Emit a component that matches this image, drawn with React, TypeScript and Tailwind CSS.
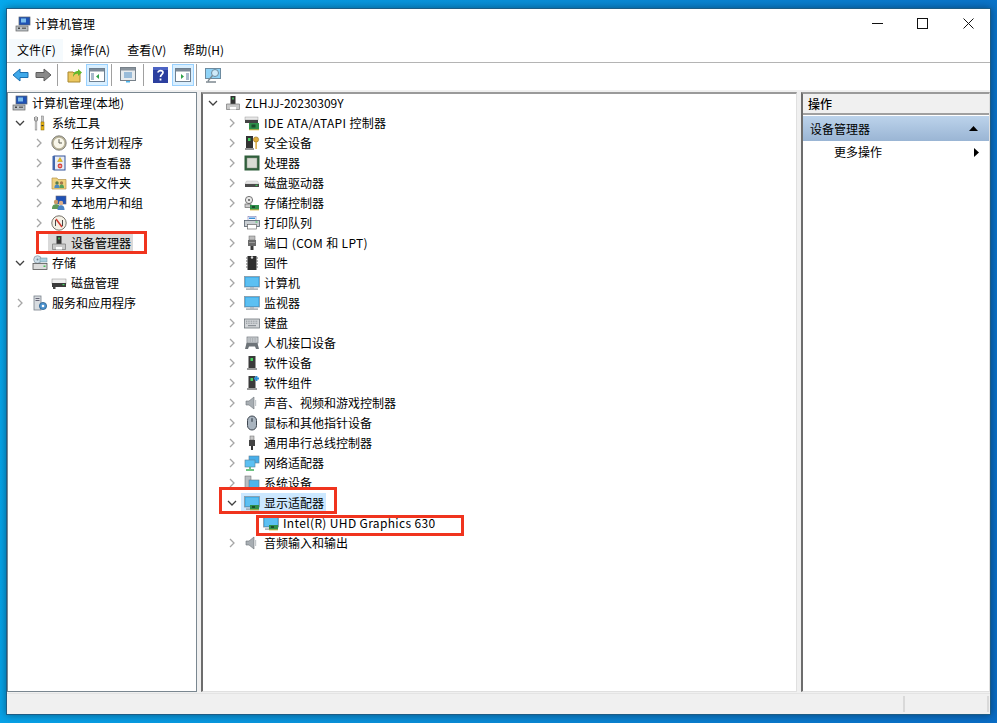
import type { ReactNode } from "react";

const Ico = ({ children, className = "w-4 h-4" }: { children: ReactNode; className?: string }) => (
  <svg viewBox="0 0 16 16" className={`${className} shrink-0`}>
    {children}
  </svg>
);

const Monitor = () => (
  <>
    <rect x="0.5" y="1.5" width="15" height="10.5" fill="#2f9fe0" stroke="#8a9aa5" strokeWidth="0.8" />
    <rect x="1.5" y="2.5" width="13" height="8.5" fill="#5cc0f2" />
    <rect x="6" y="12" width="4" height="1.5" fill="#b5bcc2" />
    <rect x="2" y="13.5" width="12" height="1.2" fill="#8d979e" />
  </>
);

const Card = () => (
  <>
    <rect x="6" y="10" width="9" height="5" fill="#2f8f4a" />
    <rect x="8" y="11" width="3" height="2" fill="#1c4d2c" />
    <rect x="6" y="14.4" width="9" height="1" fill="#d9b84a" />
  </>
);

const Tower = () => (
  <>
    <rect x="4.5" y="1" width="7" height="12" fill="#3a3a3a" />
    <rect x="6.5" y="3" width="2.5" height="3" fill="#46d060" />
    <rect x="3" y="13" width="10" height="2" fill="#9a9a9a" />
  </>
);

const Speaker = () => (
  <>
    <path d="M2 6h3l5-4v12l-5-4H2z" fill="#a8aeb3" stroke="#6d7378" strokeWidth="0.6" />
    <rect x="11" y="5" width="1.2" height="6" fill="#c4c8cb" />
  </>
);

const DevMgr = () => (
  <>
    <rect x="5.5" y="1" width="5" height="8" fill="#333" />
    <rect x="7.2" y="2.5" width="1.6" height="2" fill="#49cf62" />
    <path d="M1.5 9h13v5.5h-13z" fill="#c9c9c9" stroke="#777" strokeWidth="0.7" />
    <rect x="5" y="12" width="6" height="2.5" fill="#fff" />
  </>
);

const CompMgmt = () => (
  <>
    <rect x="4" y="1" width="11" height="8" fill="#1f52b5" stroke="#5a6470" strokeWidth="0.7" />
    <rect x="6" y="2.5" width="5" height="4" fill="#7fc0ee" />
    <rect x="1" y="10" width="12" height="5" fill="#b9bfc4" stroke="#666" strokeWidth="0.7" />
    <rect x="3" y="11.5" width="2" height="1.5" fill="#444" />
    <rect x="7" y="11.5" width="4" height="1.5" fill="#666" />
  </>
);

const icons: Record<string, ReactNode> = {
  comp: <CompMgmt />,
  tools: (
    <>
      <path d="M4 1v5M2.5 2v3c0 1 1 1.5 1.5 1.5S5.5 6 5.5 5V2" fill="none" stroke="#8a8a8a" strokeWidth="1" />
      <rect x="3.2" y="6" width="1.6" height="9" fill="#f4f4f4" stroke="#7b7b7b" strokeWidth="0.6" />
      <rect x="9.5" y="1" width="2" height="6" fill="#c8c8c8" stroke="#777" strokeWidth="0.5" />
      <rect x="9" y="7" width="3" height="8" fill="#e7b416" stroke="#8a6a00" strokeWidth="0.5" />
      <rect x="9.5" y="10" width="2" height="1.2" fill="#333" />
    </>
  ),
  clock: (
    <>
      <circle cx="8" cy="8" r="7.2" fill="#b9b39a" stroke="#70706a" strokeWidth="0.8" />
      <circle cx="8" cy="8" r="5.3" fill="#f8f6ea" />
      <path d="M8 4.2V8h3" fill="none" stroke="#5b5b50" strokeWidth="1" />
    </>
  ),
  log: (
    <>
      <rect x="3" y="1" width="11" height="14" fill="#e9edf5" stroke="#35559a" strokeWidth="1" />
      <rect x="1.5" y="1" width="2.5" height="14" fill="#4267ad" />
      <path d="M9 2.5l2.4 4H6.6z" fill="#f1c40f" stroke="#9a7a00" strokeWidth="0.4" />
      <circle cx="9" cy="11" r="2.4" fill="#d8403a" />
      <rect x="7.8" y="10.5" width="2.4" height="1" fill="#fff" />
    </>
  ),
  share: (
    <>
      <path d="M1 3h5l1 1.5h8V14H1z" fill="#efd27e" stroke="#b4944a" strokeWidth="0.7" />
      <circle cx="6" cy="8" r="1.7" fill="#5a7d46" />
      <path d="M3.4 13c0-3 1.2-3.5 2.6-3.5S8.6 10 8.6 13z" fill="#4d8ac0" />
      <circle cx="10.5" cy="8" r="1.7" fill="#a5774a" />
      <path d="M8.4 13c0-3 .8-3.5 2.1-3.5s2.5.5 2.5 3.5z" fill="#54a15c" />
    </>
  ),
  users: (
    <>
      <rect x="5" y="1" width="10" height="8" fill="#1f52b5" stroke="#667" strokeWidth="0.6" />
      <circle cx="5" cy="7" r="2.2" fill="#c99a68" />
      <path d="M1 14c0-4 2-4.7 4-4.7s4 .7 4 4.7z" fill="#5e9a5a" />
      <circle cx="10" cy="8" r="2.2" fill="#ddb088" />
      <path d="M6.5 15c0-3.6 1.6-4.7 3.5-4.7s3.5 1 3.5 4.7z" fill="#4a84c4" />
    </>
  ),
  perf: (
    <>
      <circle cx="8" cy="8" r="7.2" fill="#f4f1e6" stroke="#77736a" strokeWidth="1" />
      <path d="M5 4l6 8" stroke="#d23a30" strokeWidth="1.6" />
      <path d="M4.5 11V5M11.5 11V5" stroke="#333" strokeWidth="0.9" />
    </>
  ),
  dev: <DevMgr />,
  storage: (
    <>
      <circle cx="5.5" cy="4.5" r="3.8" fill="#cfe0ea" stroke="#7c8f9c" strokeWidth="0.7" />
      <circle cx="5.5" cy="4.5" r="1" fill="#6f8896" />
      <rect x="8" y="3" width="7" height="4" fill="#a9d1df" stroke="#6c8a98" strokeWidth="0.5" />
      <rect x="1" y="8.5" width="14" height="6" fill="#dcdcdc" stroke="#555" strokeWidth="0.8" />
      <rect x="11.5" y="10.5" width="2" height="1.5" fill="#47c25b" />
    </>
  ),
  disk: (
    <>
      <rect x="1" y="4" width="14" height="5" fill="#eeeeee" stroke="#888" strokeWidth="0.5" />
      <rect x="1" y="8" width="14" height="4" fill="#3b3b3b" />
      <rect x="11.5" y="9" width="2" height="1.2" fill="#45d35f" />
      <rect x="2" y="12" width="2.5" height="2" fill="#444" />
    </>
  ),
  services: (
    <>
      <rect x="2" y="1" width="7" height="14" fill="#d8dce0" stroke="#78808a" strokeWidth="0.8" />
      <rect x="3.5" y="3" width="4" height="1" fill="#667" />
      <rect x="3.5" y="5" width="4" height="1" fill="#667" />
      <circle cx="11" cy="11" r="3.6" fill="#4d93cf" stroke="#2a5e8c" strokeWidth="0.8" />
      <circle cx="11" cy="11" r="1.3" fill="#fff" />
    </>
  ),
  ide: (
    <>
      <rect x="1" y="2" width="13" height="3" fill="#e8e8e8" stroke="#888" strokeWidth="0.4" />
      <rect x="1" y="5" width="13" height="3" fill="#444" />
      <rect x="5" y="8" width="10" height="7" fill="#2f8f4a" />
      <rect x="7.5" y="9.5" width="4" height="3" fill="#1c4d2c" />
      <rect x="5" y="14.3" width="10" height="1" fill="#d9b84a" />
    </>
  ),
  security: (
    <>
      <rect x="2" y="1" width="7" height="12" fill="#333" />
      <rect x="4" y="3" width="2.5" height="3" fill="#46d060" />
      <rect x="1" y="13" width="9" height="2" fill="#999" />
      <circle cx="12" cy="4.5" r="2.6" fill="#e2ad3b" stroke="#96701a" strokeWidth="0.6" />
      <rect x="11.4" y="7" width="1.4" height="7" fill="#d9a432" />
    </>
  ),
  cpu: (
    <>
      <rect x="0.5" y="0.5" width="15" height="15" fill="#2f5f3b" />
      <rect x="3" y="3" width="10" height="10" fill="#d9dcd4" stroke="#8a9488" strokeWidth="0.5" />
    </>
  ),
  drive: (
    <>
      <path d="M2.5 6h11l1.5 3H1z" fill="#e6e6e6" stroke="#aaa" strokeWidth="0.4" />
      <rect x="1" y="9" width="14" height="3" fill="#4a4a4a" />
      <rect x="11.5" y="9.8" width="2" height="1.1" fill="#43d15e" />
    </>
  ),
  ctrl: (
    <>
      <circle cx="5" cy="5" r="3.6" fill="#e8e8e8" stroke="#555" strokeWidth="0.8" />
      <circle cx="5" cy="5" r="1" fill="#555" />
      <rect x="1" y="9" width="6" height="3.5" fill="#ccc" stroke="#555" strokeWidth="0.6" />
      <Card />
    </>
  ),
  printer: (
    <>
      <rect x="4" y="1.5" width="8" height="4" fill="#fff" stroke="#66a" strokeWidth="0.5" />
      <rect x="5" y="2.5" width="6" height="1.5" fill="#3f8fd8" />
      <rect x="0.5" y="5.5" width="15" height="6" fill="#c9ced2" stroke="#55606a" strokeWidth="0.8" />
      <rect x="3.5" y="9.5" width="9" height="4.5" fill="#fff" stroke="#555" strokeWidth="0.6" />
      <rect x="11.5" y="6.5" width="2" height="1" fill="#3fd05c" />
    </>
  ),
  port: (
    <>
      <rect x="5" y="1" width="6" height="4" fill="#bdbdbd" stroke="#666" strokeWidth="0.5" />
      <rect x="4" y="5" width="8" height="6" fill="#6b6b6b" />
      <rect x="5" y="7" width="6" height="1" fill="#9a9a9a" />
      <rect x="6.5" y="11" width="3" height="4" fill="#3a3a3a" />
    </>
  ),
  firmware: (
    <>
      <path d="M2 3h1.5M2 6h1.5M2 9h1.5M2 12h1.5M12.5 3H14M12.5 6H14M12.5 9H14M12.5 12H14" stroke="#666" strokeWidth="1" />
      <rect x="3.5" y="1" width="9" height="14" fill="#2e2e2e" />
      <circle cx="8" cy="2.5" r="1.2" fill="#ddd" />
    </>
  ),
  monitor: <Monitor />,
  keyboard: (
    <>
      <rect x="0.5" y="4" width="15" height="9" fill="#d2d5d8" stroke="#6f767c" strokeWidth="0.8" />
      <path d="M2 6.2h12M2 8.2h12" stroke="#8a9096" strokeWidth="1" strokeDasharray="1 .7" />
      <rect x="4" y="10" width="8" height="1.2" fill="#8a9096" />
    </>
  ),
  hid: (
    <>
      <rect x="3" y="2" width="11" height="6" fill="#cfd3d6" stroke="#6f767c" strokeWidth="0.7" />
      <path d="M4.5 4h8M4.5 6h8" stroke="#7a8086" strokeWidth="0.9" strokeDasharray="1 .7" />
      <path d="M1 14l1.5-6h11L15 14h-3l-1-2.5H5L4 14z" fill="#6d7378" />
    </>
  ),
  soft: <Tower />,
  softc: (
    <>
      <Tower />
      <path d="M12.5 1v5M10 3.5h5" stroke="#2a8fd8" strokeWidth="1.8" />
    </>
  ),
  sound: <Speaker />,
  mouse: (
    <>
      <rect x="3.5" y="1" width="9" height="14" rx="4.5" fill="#a9b4bf" stroke="#3e4650" strokeWidth="1" />
      <rect x="7.2" y="3" width="1.6" height="4" rx="0.8" fill="#56616c" />
    </>
  ),
  usb: (
    <>
      <rect x="6" y="1" width="4" height="4" fill="#c8c8c8" stroke="#666" strokeWidth="0.5" />
      <rect x="5" y="5" width="6" height="6" fill="#444" />
      <rect x="7" y="11" width="2" height="4" fill="#333" />
    </>
  ),
  network: (
    <>
      <rect x="5" y="1" width="10" height="7" fill="#47aeea" stroke="#5b7f96" strokeWidth="0.6" />
      <rect x="1" y="5" width="10" height="7" fill="#5cc0f2" stroke="#5b7f96" strokeWidth="0.6" />
      <path d="M6 12v2M2 15h8" stroke="#3fae5a" strokeWidth="1.4" />
    </>
  ),
  system: (
    <>
      <rect x="1" y="1" width="6" height="12" fill="#b9bec2" stroke="#666" strokeWidth="0.5" />
      <rect x="5" y="5" width="10" height="8" fill="#4db4ec" stroke="#6a7a85" strokeWidth="0.6" />
    </>
  ),
  display: (
    <>
      <Monitor />
      <Card />
    </>
  ),
};

type RowProps = {
  pad: string;
  icon: string;
  label: string;
  arrow?: "right" | "down";
  selected?: string;
  clipped?: boolean;
  wide?: boolean;
};

const Arrow = ({ dir }: { dir?: "right" | "down" }) => (
  <svg viewBox="0 0 10 10" className="w-[10px] h-[10px] shrink-0 mr-[7px]">
    {dir === "right" && <path d="M3 1l4 4-4 4" fill="none" stroke="#a6a6a6" strokeWidth="1.3" />}
    {dir === "down" && <path d="M1 3l4 4 4-4" fill="none" stroke="#404040" strokeWidth="1.3" />}
  </svg>
);

const Row = ({ pad, icon, label, arrow, selected, clipped, wide }: RowProps) => (
  <div className={clipped ? "h-[14px] mb-[6px] overflow-hidden" : "h-5"}>
    <div className={`h-5 flex items-center ${pad}`}>
      <Arrow dir={arrow} />
      <div className={`flex items-center h-5 gap-[1px] ${selected ?? ""}`}>
        <Ico>{icons[icon]}</Ico>
        <span className={`pl-[3px] pr-[2px] whitespace-nowrap ${wide ? "tracking-[0.35px]" : ""}`}>{label}</span>
      </div>
    </div>
  </div>
);

const leftRows: RowProps[] = [
  { pad: "ml-[-15px]", icon: "comp", label: "计算机管理(本地)" },
  { pad: "pl-[5px]", icon: "tools", label: "系统工具", arrow: "down" },
  { pad: "pl-[24px]", icon: "clock", label: "任务计划程序", arrow: "right" },
  { pad: "pl-[24px]", icon: "log", label: "事件查看器", arrow: "right" },
  { pad: "pl-[24px]", icon: "share", label: "共享文件夹", arrow: "right" },
  { pad: "pl-[24px]", icon: "users", label: "本地用户和组", arrow: "right" },
  { pad: "pl-[24px]", icon: "perf", label: "性能", arrow: "right" },
  { pad: "pl-[24px]", icon: "dev", label: "设备管理器", selected: "bg-[#d9d9d9] ml-[-3px] pl-[3px]" },
  { pad: "pl-[5px]", icon: "storage", label: "存储", arrow: "down" },
  { pad: "pl-[24px]", icon: "disk", label: "磁盘管理" },
  { pad: "pl-[5px]", icon: "services", label: "服务和应用程序", arrow: "right" },
];

const midRows: RowProps[] = [
  { pad: "pl-[5px]", icon: "dev", label: "ZLHJJ-20230309Y", arrow: "down" },
  { pad: "pl-[24px]", icon: "ide", label: "IDE ATA/ATAPI 控制器", arrow: "right", wide: true },
  { pad: "pl-[24px]", icon: "security", label: "安全设备", arrow: "right" },
  { pad: "pl-[24px]", icon: "cpu", label: "处理器", arrow: "right" },
  { pad: "pl-[24px]", icon: "drive", label: "磁盘驱动器", arrow: "right" },
  { pad: "pl-[24px]", icon: "ctrl", label: "存储控制器", arrow: "right" },
  { pad: "pl-[24px]", icon: "printer", label: "打印队列", arrow: "right" },
  { pad: "pl-[24px]", icon: "port", label: "端口 (COM 和 LPT)", arrow: "right", wide: true },
  { pad: "pl-[24px]", icon: "firmware", label: "固件", arrow: "right" },
  { pad: "pl-[24px]", icon: "monitor", label: "计算机", arrow: "right" },
  { pad: "pl-[24px]", icon: "monitor", label: "监视器", arrow: "right" },
  { pad: "pl-[24px]", icon: "keyboard", label: "键盘", arrow: "right" },
  { pad: "pl-[24px]", icon: "hid", label: "人机接口设备", arrow: "right" },
  { pad: "pl-[24px]", icon: "soft", label: "软件设备", arrow: "right" },
  { pad: "pl-[24px]", icon: "softc", label: "软件组件", arrow: "right" },
  { pad: "pl-[24px]", icon: "sound", label: "声音、视频和游戏控制器", arrow: "right" },
  { pad: "pl-[24px]", icon: "mouse", label: "鼠标和其他指针设备", arrow: "right" },
  { pad: "pl-[24px]", icon: "usb", label: "通用串行总线控制器", arrow: "right" },
  { pad: "pl-[24px]", icon: "network", label: "网络适配器", arrow: "right" },
  { pad: "pl-[24px]", icon: "system", label: "系统设备", arrow: "right", clipped: true },
  { pad: "pl-[24px]", icon: "display", label: "显示适配器", arrow: "down", selected: "bg-[#cce8ff] ml-[-3px] pl-[3px]" },
  { pad: "pl-[43px]", icon: "display", label: "Intel(R) UHD Graphics 630", wide: true },
  { pad: "pl-[24px]", icon: "sound", label: "音频输入和输出", arrow: "right" },
];

const menus = ["文件(F)", "操作(A)", "查看(V)", "帮助(H)"];

const Sep = () => <div className="w-px h-[22px] bg-[#a0a0a0]" />;

const PaneBtn = ({ right }: { right?: boolean }) => (
  <div className="w-[22px] h-[22px] border border-[#99d1ff] bg-[#d9efff] flex items-center justify-center">
    <svg viewBox="0 0 16 14" className="w-4 h-[14px]">
      <rect x="0.5" y="0.5" width="15" height="13" fill="#fff" stroke="#6d7f90" />
      <rect x="1" y="1" width="14" height="2.5" fill="#7d8b98" />
      {right ? (
        <>
          <rect x="11" y="5" width="3" height="7" fill="#a9bbcc" />
          <path d="M6 6l3 2.5L6 11z" fill="#2fa34a" />
        </>
      ) : (
        <>
          <rect x="2" y="5" width="3" height="7" fill="#a9bbcc" />
          <path d="M10 6L7 8.5l3 2.5z" fill="#2fa34a" />
        </>
      )}
    </svg>
  </div>
);

const Toolbar = () => (
  <div className="h-[28px] bg-white flex items-center pl-[4px] pb-[3px] border-t border-[#b4b4b4] shrink-0">
    <svg viewBox="0 0 17 16" className="w-[17px] h-4 ml-[1px]">
      <path d="M1 8l7-6v3.5h8v5H8V14z" fill="#3fa9ea" stroke="#1b6fb0" />
    </svg>
    <svg viewBox="0 0 17 16" className="w-[17px] h-4 ml-[6px] mr-[5px]">
      <path d="M16 8L9 2v3.5H1v5h8V14z" fill="#8a8a8a" stroke="#5c5c5c" />
    </svg>
    <Sep />
    <svg viewBox="0 0 16 16" className="w-4 h-4 ml-[9px] mr-[3px]">
      <path d="M1 5h5l1 1h6v9H1z" fill="#ecc75f" stroke="#a8872e" />
      <path d="M6 10c0-4 2-6 5-6V2l4 3.5L11 9V6.5c-2 0-4 1-5 3.5z" fill="#63b82c" />
    </svg>
    <PaneBtn />
    <div className="w-[3px]" />
    <Sep />
    <svg viewBox="0 0 16 16" className="w-4 h-4 ml-[8px] mr-[7px]">
      <rect x="0.5" y="0.5" width="15" height="13" fill="#e7ebee" stroke="#77818a" />
      <rect x="1" y="1" width="14" height="2.5" fill="#8a949d" />
      <path d="M4 6h8M4 8h8M4 10h8" stroke="#4d8cc4" strokeWidth="1" />
      <rect x="6" y="14" width="4" height="1.5" fill="#4db4ec" />
    </svg>
    <Sep />
    <svg viewBox="0 0 15 16" className="w-[15px] h-4 ml-[9px] mr-[4px]">
      <rect width="15" height="16" fill="#2c3f9e" />
      <rect x="0" y="0" width="15" height="3" fill="#4c63c4" />
      <path d="M5 5.5C5 3 10 3 10 5.5 10 7.5 7.5 7.5 7.5 10" fill="none" stroke="#fff" strokeWidth="1.7" />
      <rect x="6.6" y="11.5" width="1.8" height="2" fill="#fff" />
    </svg>
    <PaneBtn right />
    <div className="w-[2px]" />
    <Sep />
    <svg viewBox="0 0 17 16" className="w-[17px] h-4 ml-[8px]">
      <rect x="0.5" y="1.5" width="15" height="10" fill="#8fd3f7" stroke="#6d8ba0" />
      <circle cx="10" cy="6" r="3.5" fill="#cfeaf9" stroke="#6d8ba0" />
      <path d="M7.5 8.5L3 14M1 15h10" stroke="#7d8890" strokeWidth="1.3" />
    </svg>
  </div>
);

export default function App() {
  return (
    <div
      className="relative w-[997px] h-[723px] overflow-hidden pl-[6px] pt-[8px] bg-[linear-gradient(100deg,#06a8ec_0%,#0a8fd8_45%,#0a6cc4_100%)] text-[12px] leading-5 text-black"
      style={{ fontFamily: '"Noto Sans CJK SC", "Liberation Sans", sans-serif' }}
    >
      <div className="w-[985px] h-[707px] border border-[#1d5c85] bg-[#f0f0f0] flex flex-col shadow-[0_0_8px_rgba(0,0,0,0.4)]">
        <div className="h-[29px] bg-white flex items-center shrink-0">
          <div className="pl-[8px] pr-[4px]">
            <Ico>{icons.comp}</Ico>
          </div>
          <span>计算机管理</span>
          <div className="ml-auto flex items-center">
            <svg viewBox="0 0 11 11" className="w-[11px] h-[11px]">
              <path d="M0 5.5h11" stroke="#111" />
            </svg>
            <svg viewBox="0 0 11 11" className="w-[11px] h-[11px] ml-[34px]">
              <rect x="0.5" y="0.5" width="10" height="10" fill="none" stroke="#111" />
            </svg>
            <svg viewBox="0 0 11 11" className="w-[11px] h-[11px] ml-[35px] mr-[16px]">
              <path d="M0.5 0.5l10 10M10.5 0.5l-10 10" stroke="#111" />
            </svg>
          </div>
        </div>

        <div className="h-[24px] bg-white flex items-center pl-[2px] shrink-0">
          {menus.map((m, i) => (
            <div
              key={m}
              className={`h-[23px] flex items-center pl-[8px] ${i === 0 ? "bg-[#f5fafd] pr-[7px]" : "pr-[8px]"} ${i > 1 ? "ml-[1px]" : ""}`}
            >
              {m}
            </div>
          ))}
        </div>

        <Toolbar />

        <div className="flex-1 flex pt-[2px] min-h-0">
          <div className="w-[190px] border border-[#7a8790] bg-white pl-[2px] overflow-hidden">
            {leftRows.map((r) => (
              <Row key={r.label} {...r} />
            ))}
          </div>
          <div className="w-[3px]" />
          <div className="w-[596px] border-l-2 border-t-2 border-l-[#6d6d6d] border-t-[#9a9a9a] border-r border-b border-r-[#e0e0e0] border-b-[#e0e0e0] bg-white overflow-hidden ml-px">
            <div className="-mt-px">
              {midRows.map((r) => (
                <Row key={r.label} {...r} />
              ))}
            </div>
          </div>
          <div className="w-[4px]" />
          <div className="flex-1 border-l-2 border-t-2 border-l-[#6d6d6d] border-t-[#9a9a9a] border-r border-b border-r-[#e0e0e0] border-b-[#e0e0e0] bg-white">
            <div className="h-[21px] bg-[#f0f0f0] border-b-2 border-[#a0a0a0] flex items-center pl-[5px] font-medium">操作</div>
            <div className="h-[25px] bg-[linear-gradient(#bcd3eb,#9ab5d4)] flex items-center pl-[7px] pr-[11px] mt-[1px] justify-between">
              <span>设备管理器</span>
              <svg viewBox="0 0 9 5" className="w-[9px] h-[5px]">
                <path d="M4.5 0L9 5H0z" fill="#000" />
              </svg>
            </div>
            <div className="h-5 mt-[1px] flex items-center pl-[31px] pr-[10px] justify-between">
              <span>更多操作</span>
              <svg viewBox="0 0 5 9" className="w-[5px] h-[9px]">
                <path d="M0 0l5 4.5L0 9z" fill="#000" />
              </svg>
            </div>
          </div>
        </div>

        <div className="h-[21px] shrink-0 flex mt-px border-t border-[#e4e4e4]">
          <div className="flex-1" />
          <div className="w-[86px] border-l-2 border-r-2 border-[#d9d9d9] my-[2px]" />
          <div className="w-[1px]" />
        </div>
      </div>

      {/* red annotation boxes */}
      <div className="absolute left-[36px] top-[231px] w-[111px] h-[23px] border-[3px] border-[#f0341e]" />
      <div className="absolute left-[219px] top-[487px] w-[118px] h-[27px] border-[3px] border-[#f0341e]" />
      <div className="absolute left-[256px] top-[515px] w-[208px] h-[21px] border-[3px] border-[#f0341e]" />
    </div>
  );
}
